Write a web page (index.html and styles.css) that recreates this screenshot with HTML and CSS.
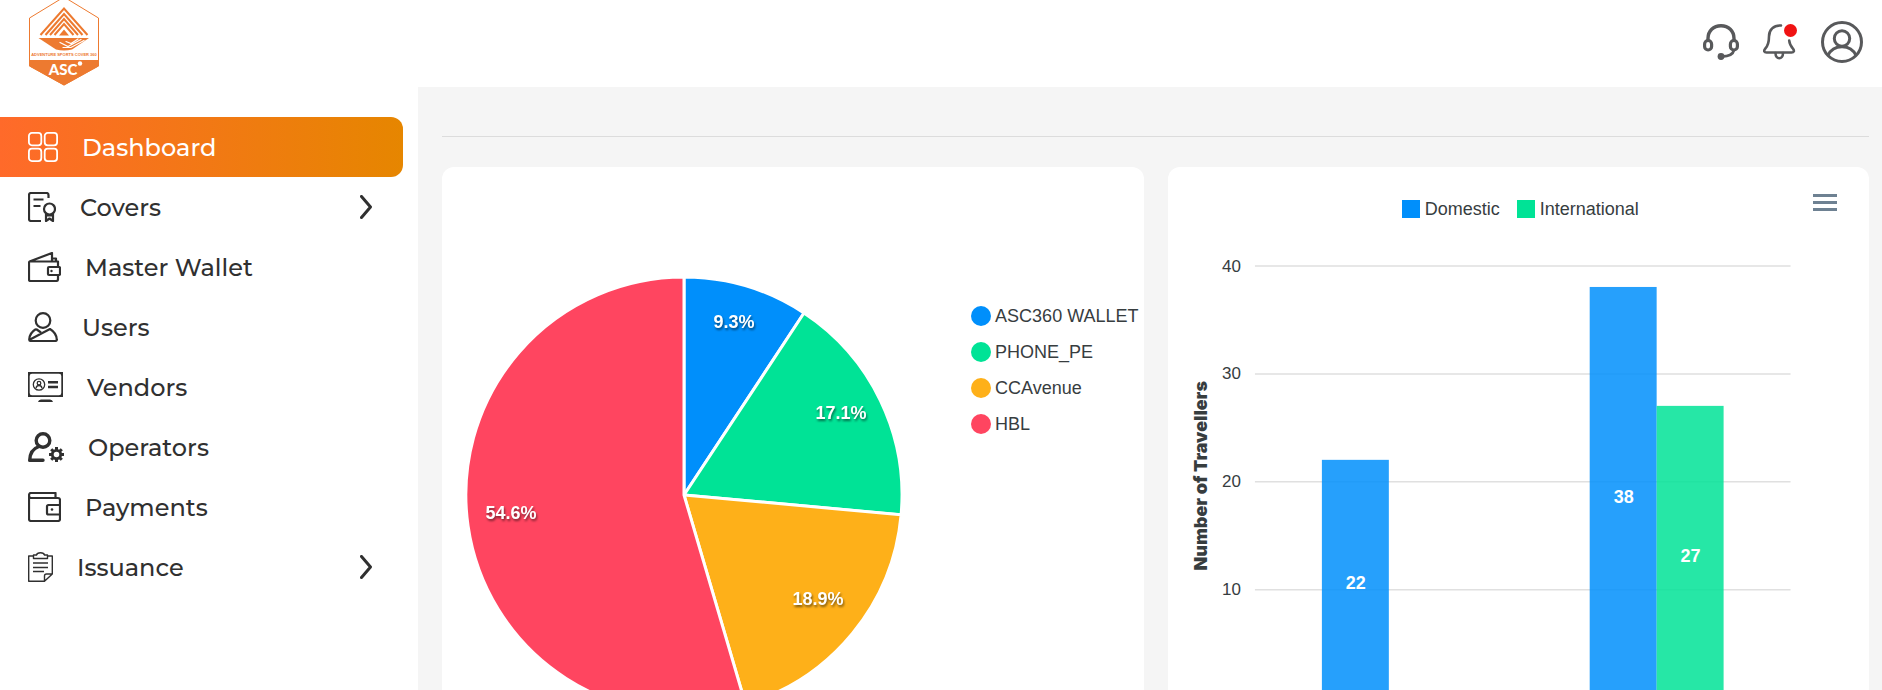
FILE: index.html
```html
<!DOCTYPE html>
<html lang="en">
<head>
<meta charset="utf-8">
<title>Dashboard</title>
<link rel="stylesheet" href="styles.css">
</head>
<body>
<div class="app">
  <header class="topbar">
    <a class="logo" href="#" aria-label="Adventure Sports Cover 360">
      <svg width="72" height="87" viewBox="28 0 72 87">
        <path d="M64-3 98.500 18V66L64 85 29.500 66V18Z" fill="#fff" stroke="#ed7a30" stroke-width="1"/>
        <path d="M29 60H99V66L64 85.500 29 66Z" fill="#ed7a30"/>
        <g fill="none" stroke="#ed7a30" stroke-width="2">
          <path d="M40.500 35 64 8.500 87.500 35"/>
          <path d="M45.500 35 64 14 82.500 35"/>
          <path d="M50 35 64 19 78 35"/>
          <path d="M54.500 35 64 24 73.500 35"/>
        </g>
        <path d="M59 35.500 64 29.500 69 35.500Z" fill="#ed7a30"/>
        <path d="M38.500 38H89L72 49.500Q64 51.500 56 49.500Z" fill="#ed7a30"/>
        <g fill="none" stroke="#fff" stroke-width="1.200" stroke-linecap="round"><path d="M60 42.500 68 46.500 81 39.500M66 41.500 71 43.500 78 39M63 47.500H71L84 40.500"/></g>
        <text class="logo-line" x="64" y="56" text-anchor="middle">ADVENTURE SPORTS COVER 360</text>
        <text class="logo-name" x="63" y="75" text-anchor="middle">ASC</text>
        <circle cx="80" cy="63.500" r="2.200" fill="#fff"/>
      </svg>
    </a>
    <div class="actions">
      <button class="action" type="button" aria-label="Support">
        <svg width="36" height="36" viewBox="0 0 36 36" fill="none" stroke="#58595b" stroke-width="3.200">
          <path d="M5 17V14.500C5 7 10.500 1.700 18 1.700S31 7 31 14.500V17" stroke-width="3.400"/>
          <rect x="1.600" y="16.500" width="7" height="9.500" rx="3.500"/><rect x="27.400" y="16.500" width="7" height="9.500" rx="3.500"/>
          <path d="M31 26C30 30.500 26 32.500 19 32.500" stroke-width="2.800"/><circle cx="18" cy="32.500" r="3.400" fill="#58595b" stroke="none"/>
        </svg>
      </button>
      <button class="action" type="button" aria-label="Notifications">
        <svg width="34" height="36" viewBox="0 0 34 36" fill="none" stroke="#58595b" stroke-width="2.600" stroke-linecap="round">
          <path d="M18 1.500C10.500 1 6 6 6 12.500 6 19 5 22 2 25 .500 27 1.200 28.500 3.500 28.500H28.500C31 28.500 31.500 27 30.200 25 27.500 22 26.500 20.500 26.200 16.500"/>
          <path d="M12.500 29C12.500 36 20 36 20 29"/><circle cx="27.500" cy="6.500" r="6.500" fill="#f01313" stroke="none"/>
        </svg>
      </button>
      <button class="action" type="button" aria-label="Account">
        <svg width="42" height="42" viewBox="0 0 42 42" fill="none" stroke="#58595b" stroke-width="3">
          <circle cx="21" cy="21" r="19.500"/><circle cx="21" cy="17.500" r="7.700"/><path d="M7 34.500C9.500 29 14.500 25.800 21 25.800S32.500 29 35 34.500"/>
        </svg>
      </button>
    </div>
  </header>
  <div class="body">
    <nav class="sidebar">
      <a class="item item-active" href="#">
        <svg width="30" height="30" viewBox="0 0 30 30" fill="none" stroke="#fff" stroke-width="1.800"><rect x=".900" y=".900" width="12.400" height="12.400" rx="3"/><rect x="16.700" y=".900" width="12.400" height="12.400" rx="3"/><rect x=".900" y="16.700" width="12.400" height="12.400" rx="3"/><rect x="16.700" y="16.700" width="12.400" height="12.400" rx="3"/></svg>
        <span>Dashboard</span>
      </a>
      <a class="item" href="#">
        <svg class="ink" width="28" height="30" viewBox="0 0 28 30"><path d="M20.500 6V3Q20.500 1 18.500 1H3Q1 1 1 3V27Q1 29 3 29H13M5.500 7.500H15.500M5.500 14H12.500"/><circle cx="21.500" cy="17" r="5.500"/><path d="M18 22V29L21.500 26.500 25 29V22M18.500 23.500H24.500"/></svg>
        <span>Covers</span>
        <svg class="chevron" width="12" height="24" viewBox="0 0 12 24"><path d="M1.500 1.500 10.500 12 1.500 22.500"/></svg>
      </a>
      <a class="item" href="#">
        <svg class="ink" width="33" height="30" viewBox="0 0 33 30"><path d="M1 9.500V27.500Q1 29 2.500 29H28Q30 29 30 27.500V23M30 15V9.500H1.500L24 1V9M28 9V6.500H25"/><rect x="20" y="15" width="12" height="8" rx="1"/><circle class="dot" cx="23.500" cy="19" r="1.200"/></svg>
        <span>Master Wallet</span>
      </a>
      <a class="item" href="#">
        <svg class="ink" width="30" height="30" viewBox="0 0 30 30"><circle cx="15" cy="8.500" r="7.300"/><path d="M8 17Q1.500 21 1.200 27.500 1.200 29 3 29H27Q29 29 28.800 27.500 28.500 21 22 17L2 27.500M8 17 13 20.500"/></svg>
        <span>Users</span>
      </a>
      <a class="item" href="#">
        <svg class="ink" width="35" height="30" viewBox="0 0 35 30"><path fill="#303030" fill-rule="evenodd" stroke="none" d="M0 0H35V25H0ZM4 1.700Q1.700 1.700 1.700 4V21Q1.700 23.300 4 23.300H31Q33.300 23.300 33.300 21V4Q33.300 1.700 31 1.700ZM10 30Q10.500 27.500 13 27.500H22Q24.500 27.500 25 30Z"/><circle cx="11" cy="12.500" r="5.700" stroke-width="1.300"/><circle cx="11" cy="11.200" r="1.800" stroke-width="1.300"/><path d="M8 16Q8.500 13.500 11 13.500T14 16" stroke-width="1.300"/><path d="M20 10.200H30M20 15H30" stroke-width="2.400"/></svg>
        <span>Vendors</span>
      </a>
      <a class="item" href="#">
        <svg class="ink" width="36" height="30" viewBox="0 0 36 30"><g stroke-width="3.400"><circle cx="15" cy="8.500" r="6.800"/><path d="M11 14.500Q2 17.500 1.700 28.300H15" stroke-linecap="round"/></g><circle cx="28.500" cy="22.500" r="4.200" stroke-width="2.800"/><path d="M28.500 15V18M28.500 27V30M21 22.500H24M33 22.500H36M23.200 17.200 25.300 19.300M31.700 25.700 33.800 27.800M33.800 17.200 31.700 19.300M25.300 25.700 23.200 27.800" stroke-width="3"/></svg>
        <span>Operators</span>
      </a>
      <a class="item" href="#">
        <svg class="ink" width="33" height="30" viewBox="0 0 33 30"><path d="M1 3V27Q1 29 3 29H30Q32 29 32 27V8Q32 6 30 6H3Q1 6 1 3.500 1 1 3 1H27.500V6M32 13H20.500Q19 13 19 14.500V21Q19 22.500 20.500 22.500H32"/><circle class="dot" cx="24" cy="17.500" r="1.300"/></svg>
        <span>Payments</span>
      </a>
      <a class="item" href="#">
        <svg class="ink thin" width="25" height="30" viewBox="0 0 25 30"><path d="M5.500 4H.700V29.300H16.500L24.300 22V4H19.500M16.500 29.300V24Q16.500 22 18.500 22H24.300M5.500 3H8.500Q9 .700 12.500 .700T16.500 3H19.500V6.500H5.500ZM5 11H20M5 15.500H20M5 19.500H16"/></svg>
        <span>Issuance</span>
        <svg class="chevron" width="12" height="24" viewBox="0 0 12 24"><path d="M1.500 1.500 10.500 12 1.500 22.500"/></svg>
      </a>
    </nav>
    <main class="main">
      <hr class="rule">
      <div class="cards">
        <section class="card pie-card">
          <svg class="pie" viewBox="0 0 436 436" role="img" aria-label="Payments by mode">
            <g stroke="#fff" stroke-width="3">
              <path fill="#008ffb" d="M218 218V0A218 218 0 0 1 338 36Z"/>
              <path fill="#00e396" d="M218 218 338 36A218 218 0 0 1 435.100 237.800Z"/>
              <path fill="#feb019" d="M218 218 435.100 237.800A218 218 0 0 1 279.500 427.100Z"/>
              <path fill="#ff4560" d="M218 218 279.500 427.100A218 218 0 1 1 218 0Z"/>
            </g>
            <g class="slice-label">
              <text x="268" y="51">9.3%</text><text x="375" y="142">17.1%</text><text x="352" y="328">18.9%</text><text x="45" y="242">54.6%</text>
            </g>
          </svg>
          <ul class="pie-legend">
            <li><i class="disc blue"></i>ASC360 WALLET</li>
            <li><i class="disc green"></i>PHONE_PE</li>
            <li><i class="disc amber"></i>CCAvenue</li>
            <li><i class="disc red"></i>HBL</li>
          </ul>
        </section>
        <section class="card">
          <div class="chart-head">
            <ul class="bar-legend">
              <li><i class="square blue"></i>Domestic</li>
              <li><i class="square green"></i>International</li>
            </ul>
            <button class="menu" type="button" aria-label="Chart menu"><span></span><span></span><span></span></button>
          </div>
          <svg class="bars" viewBox="0 0 702 520" role="img" aria-label="Number of travellers">
            <path d="M87 27H623M87 135H623M87 243H623M87 351H623M87 458H623" stroke="#e0e0e0" stroke-width="1.500"/>
            <g class="tick"><text x="73" y="33">40</text><text x="73" y="140">30</text><text x="73" y="248">20</text><text x="73" y="356">10</text></g>
            <text class="axis-title" transform="translate(39 237) rotate(-90)">Number of Travellers</text>
            <g fill-opacity=".85">
              <rect x="154" y="221" width="67" height="237" fill="#008ffb"/>
              <rect x="422" y="48" width="67" height="410" fill="#008ffb"/>
              <rect x="489" y="167" width="67" height="291" fill="#00e396"/>
            </g>
            <g class="bar-label"><text x="188" y="350">22</text><text x="456" y="264">38</text><text x="523" y="323">27</text></g>
          </svg>
        </section>
      </div>
    </main>
  </div>
</div>
</body>
</html>
```
FILE: styles.css
```css
* { box-sizing: border-box; }
body { margin: 0; background: #fff; color: #373d3f; font-family: "Liberation Sans", Arial, sans-serif; font-size: 18px; }
ul { list-style: none; margin: 0; padding: 0; }
button { border: 0; padding: 0; background: none; cursor: pointer; }
.app { display: flex; flex-direction: column; height: 100vh; overflow: hidden; }

.topbar { display: flex; justify-content: space-between; align-items: flex-start; flex: none; height: 87px; padding: 0 19px 0 28px; }
.logo svg, .action svg { display: block; }
.logo-line { font: bold 4px "Liberation Sans Narrow", "Liberation Sans", sans-serif; fill: #ed7a30; }
.logo-name { font: 900 15px Lato, sans-serif; fill: #fff; }
.actions { display: flex; align-items: center; gap: 24px; padding-top: 21px; }

.body { display: flex; flex: 1; min-height: 0; }
.sidebar { flex: none; width: 418px; padding: 30px 15px 0 0; }
.item { display: flex; align-items: center; gap: 24px; height: 60px; padding: 0 31px 0 28px; color: #303030; font: 500 24px Montserrat, Inter, sans-serif; text-decoration: none; }
.item svg { flex: none; }
.item-active { border-radius: 0 12px 12px 0; background: linear-gradient(90deg, #ff6a2a, #e68600); color: #fff; }
.ink { fill: none; stroke: #303030; stroke-width: 2.2px; stroke-linejoin: round; }
.thin { stroke-width: 1.4px; }
.dot { fill: #303030; stroke: none; }
.chevron { margin-left: auto; fill: none; stroke: #303030; stroke-width: 3; stroke-linecap: round; stroke-linejoin: round; }

.main { flex: 1; min-width: 0; padding: 49px 13px 24px 24px; background: #f5f5f5; overflow: hidden; }
.rule { margin: 0 0 30px; border: 0; border-top: 1px solid #dcdcdc; }
.cards { display: grid; grid-template-columns: 1fr 1fr; gap: 24px; }
.card { min-width: 0; border-radius: 12px; background: #fff; }

.pie-card { display: flex; justify-content: space-between; align-items: flex-start; padding: 110px 5px 24px 24px; }
.pie { flex: 0 1 436px; min-width: 0; }
.slice-label, .bar-label { font-size: 18px; font-weight: bold; fill: #fff; text-anchor: middle; }
.slice-label { filter: drop-shadow(1px 2px 1px rgba(0, 0, 0, .5)); }
.pie-legend { flex: none; margin-top: 21px; line-height: 36px; }
.pie-legend li { display: flex; align-items: center; gap: 4px; }
.disc { width: 20px; height: 20px; border-radius: 50%; }
.square { width: 18px; height: 18px; }
.blue { background: #008ffb; }
.green { background: #00e396; }
.amber { background: #feb019; }
.red { background: #ff4560; }

.chart-head { display: grid; grid-template-columns: 1fr auto 1fr; align-items: start; height: 72px; padding: 27px 32px 0 36px; }
.bar-legend { grid-column: 2; display: flex; gap: 17px; line-height: 30px; }
.bar-legend li { display: flex; align-items: center; gap: 5px; }
.menu { display: flex; flex-direction: column; justify-self: end; gap: 4px; width: 24px; }
.menu span { height: 3px; background: #6e8192; }
.bars { display: block; width: 100%; }
.tick { font-size: 17px; fill: #373d3f; text-anchor: end; }
.axis-title { font: 900 18px Inter, sans-serif; fill: #373d3f; text-anchor: middle; }
```
